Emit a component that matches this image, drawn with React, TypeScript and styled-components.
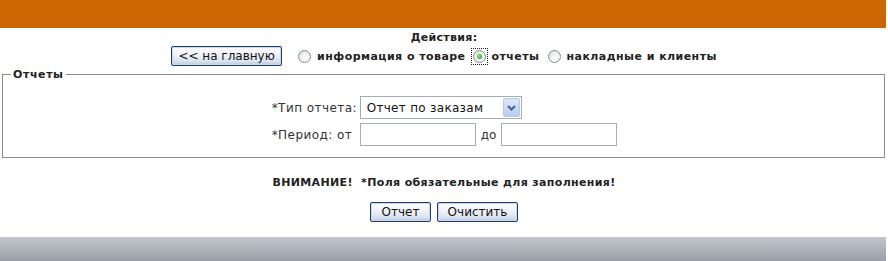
import React from "react";
import styled, { createGlobalStyle } from "styled-components";

const GlobalStyle = createGlobalStyle`
    html, body {
        margin: 0;
        padding: 0;
        background: #ffffff;
    }
    body {
        font-family: "DejaVu Sans", Verdana, sans-serif;
        font-size: 11px;
        color: #222222;
    }
`;

// Page shell
const Page = styled.div`
    width: 888px;
    display: flex;
    flex-direction: column;
`;

const TopBar = styled.div`
    height: 28px;
    background: #cc6600;
    margin-right: 2px;
`;

// Actions block
const Actions = styled.div`
    display: flex;
    flex-direction: column;
    align-items: center;
    padding-top: 3px;
`;

const ActionsTitle = styled.div`
    font-weight: bold;
    font-size: 11px;
    line-height: 14px;
    letter-spacing: 0.3px;
`;

const ActionsRow = styled.div`
    display: flex;
    align-items: center;
    height: 20px;
    margin-top: 1px;
`;

const RadioLabel = styled.label<{ $gap: number }>`
    display: flex;
    align-items: center;
    font-weight: bold;
    font-size: 11px;
    letter-spacing: 0.45px;
    margin-left: ${(p) => p.$gap}px;
    gap: 4px;
    white-space: nowrap;
`;

// dotted focus rectangle around the checked radio
const RadioFocus = styled.span<{ $on?: boolean }>`
    display: inline-flex;
    padding: 1px;
    border: 1px dotted ${(p) => (p.$on ? "#222" : "transparent")};
`;

const Radio = styled.input.attrs({ type: "radio" })`
    appearance: none;
    -webkit-appearance: none;
    margin: 0;
    width: 13px;
    height: 13px;
    border-radius: 50%;
    border: 1px solid #7a8fa6;
    background: radial-gradient(circle at 62% 68%, #ffffff 0%, #f4f4f0 40%, #d4d4ce 100%);
    box-sizing: border-box;
    position: relative;
    &:checked::after {
        content: "";
        position: absolute;
        left: 3px;
        top: 3px;
        width: 5px;
        height: 5px;
        border-radius: 50%;
        background: radial-gradient(circle at 40% 40%, #8ee88a 0%, #2ca52c 70%, #1b8a1b 100%);
    }
`;

// XP style push button
const Button = styled.button<{ $w: number }>`
    width: ${(p) => p.$w}px;
    height: 20px;
    padding: 0;
    border: 1px solid #1f3f73;
    border-radius: 2px;
    background: linear-gradient(#fdfeff 0%, #eef2f8 45%, #d9e2ee 80%, #b9c8dd 100%);
    box-shadow: inset 0 0 0 1px #c9d6e8;
    font-family: "DejaVu Sans", Verdana, sans-serif;
    font-size: 12px;
    color: #111;
    line-height: 16px;
    cursor: pointer;
`;

// Reports fieldset
const Fieldset = styled.fieldset`
    margin: 2px 3px 0 2px;
    padding: 15px 0 11px 0;
    border: 1px solid #8c8c8c;
    min-width: 0;
`;

const Legend = styled.legend`
    font-weight: bold;
    font-size: 11px;
    letter-spacing: 0.6px;
    padding: 0 2px;
    margin-left: 8px;
    color: #222;
`;

const FormGrid = styled.div`
    display: grid;
    grid-template-columns: 88px auto;
    justify-content: center;
    row-gap: 4px;
    margin-left: 2px;
    font-size: 12px;
    letter-spacing: 0.45px;
`;

const FieldLabel = styled.div`
    display: flex;
    align-items: center;
    color: #333;
    white-space: nowrap;
`;

const FieldCell = styled.div`
    display: flex;
    align-items: center;
    color: #333;
`;

const SelectBox = styled.div`
    position: relative;
    width: 162px;
    height: 23px;
    border: 1px solid #a5acb5;
    box-sizing: border-box;
    background: #fff;
    display: flex;
    align-items: center;
    padding-left: 6px;
    font-size: 12px;
    color: #111;
    letter-spacing: 0.3px;
`;

const SelectArrow = styled.div`
    position: absolute;
    right: 1px;
    top: 1px;
    width: 17px;
    height: 19px;
    box-sizing: border-box;
    border: 1px solid #b7c7e4;
    border-radius: 2px;
    background: linear-gradient(#dbe6fb, #b9cdf4);
    display: flex;
    align-items: center;
    justify-content: center;
`;

const TextInput = styled.input`
    width: 116px;
    height: 23px;
    box-sizing: border-box;
    border: 1px solid #a5acb5;
    margin: 0;
    font-family: inherit;
    font-size: 12px;
`;

const Sep = styled.span`
    margin: 0 5px 0 5px;
    letter-spacing: 0;
`;

const Notice = styled.div`
    text-align: center;
    font-weight: bold;
    font-size: 11px;
    letter-spacing: 0.35px;
    margin-top: 18px;
    line-height: 14px;
`;

const ButtonRow = styled.div`
    display: flex;
    justify-content: center;
    gap: 6px;
    margin-top: 12px;
`;

const Footer = styled.div`
    height: 25px;
    margin-top: 15px;
    margin-right: 2px;
    background: linear-gradient(#c4c7cd, #989da6);
`;

export default function App() {
    return (
        <Page>
            <GlobalStyle />
            <TopBar />
            <Actions>
                <ActionsTitle>Действия:</ActionsTitle>
                <ActionsRow>
                    <Button $w={111}>&lt;&lt; на главную</Button>
                    <RadioLabel $gap={14}>
                        <RadioFocus><Radio name="act" /></RadioFocus>
                        информация о товаре
                    </RadioLabel>
                    <RadioLabel $gap={5}>
                        <RadioFocus $on><Radio name="act" defaultChecked /></RadioFocus>
                        отчеты
                    </RadioLabel>
                    <RadioLabel $gap={6}>
                        <RadioFocus><Radio name="act" /></RadioFocus>
                        накладные и клиенты
                    </RadioLabel>
                </ActionsRow>
            </Actions>
            <Fieldset>
                <Legend>Отчеты</Legend>
                <FormGrid>
                    <FieldLabel>*Тип отчета:</FieldLabel>
                    <FieldCell>
                        <SelectBox>
                            Отчет по заказам
                            <SelectArrow>
                                <svg width="9" height="6" viewBox="0 0 9 6">
                                    <path d="M1 1 L4.5 4.5 L8 1" fill="none" stroke="#4d6185" strokeWidth="2" />
                                </svg>
                            </SelectArrow>
                        </SelectBox>
                    </FieldCell>
                    <FieldLabel>*Период: от</FieldLabel>
                    <FieldCell>
                        <TextInput />
                        <Sep>до</Sep>
                        <TextInput />
                    </FieldCell>
                </FormGrid>
            </Fieldset>
            <Notice>ВНИМАНИЕ!&nbsp; *Поля обязательные для заполнения!</Notice>
            <ButtonRow>
                <Button $w={61}>Отчет</Button>
                <Button $w={81}>Очистить</Button>
            </ButtonRow>
            <Footer />
        </Page>
    );
}
